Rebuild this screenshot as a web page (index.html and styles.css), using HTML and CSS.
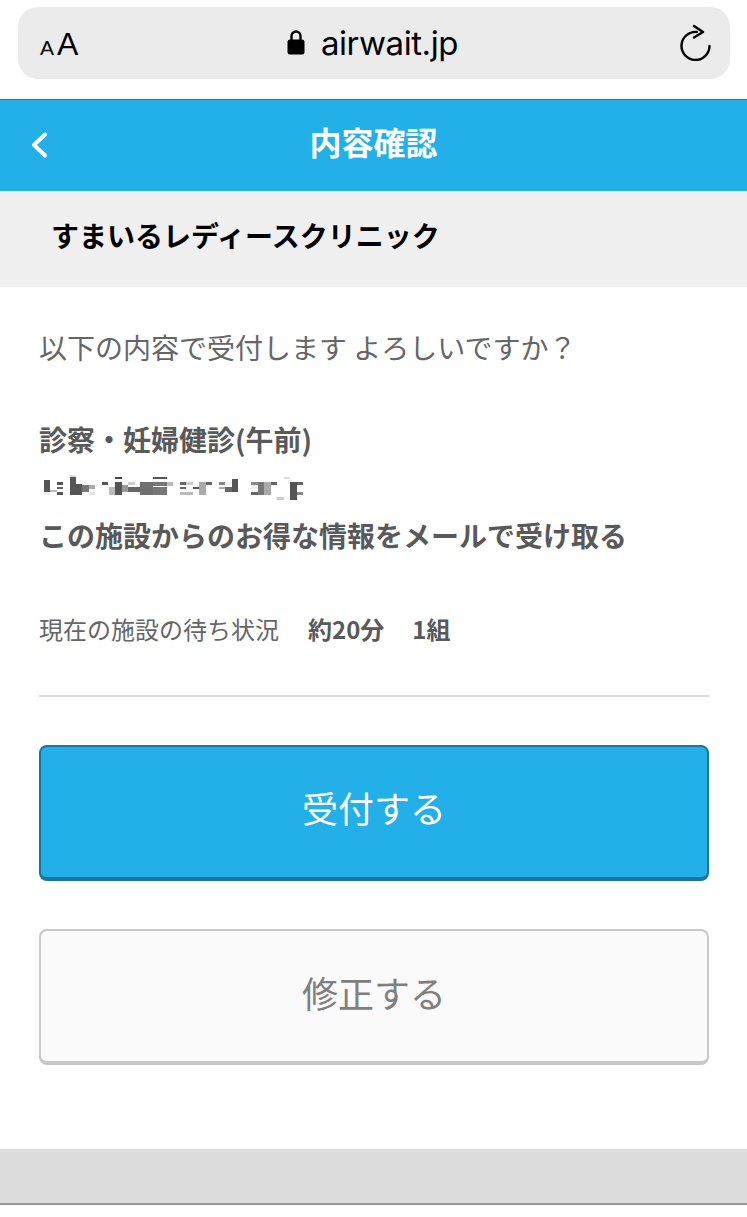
FILE: index.html
```html
<!DOCTYPE html>
<html lang="ja">
<head>
<meta charset="utf-8">
<title>内容確認</title>
<link rel="stylesheet" href="styles.css">
</head>
<body>
<div class="chrome">
  <div class="urlbar">
    <div class="aa"><span class="aa-small">A</span><span class="aa-big">A</span></div>
    <div class="address">
      <svg class="lock" width="18" height="26" viewBox="0 0 18 26"><path d="M4.500 11V7a4.500 4.500 0 0 1 9 0V11" fill="none" stroke="#000" stroke-width="2.400"/><rect x="0.500" y="10.500" width="17" height="15" rx="2.500" fill="#000"/></svg>
      <span class="host">airwait.jp</span>
    </div>
    <svg class="reload" width="32" height="38" viewBox="0 0 32 38"><path d="M17 8A14 14 0 1 0 29.500 22" fill="none" stroke="#000" stroke-width="2.400" stroke-linecap="round"/><path d="M14 2l9 6-9 5.500" fill="none" stroke="#000" stroke-width="2.400" stroke-linecap="round" stroke-linejoin="round"/></svg>
  </div>
</div>
<header class="nav">
  <svg class="back" width="16" height="26" viewBox="0 0 16 26"><path d="M14 2.500 3 13l11 10.500" fill="none" stroke="#fff" stroke-width="4" stroke-linecap="round" stroke-linejoin="round"/></svg>
  <h1 class="title">内容確認</h1>
</header>
<div class="clinic">すまいるレディースクリニック</div>
<main class="content">
  <p class="lead">以下の内容で受付します よろしいですか？</p>
  <p class="strong first">診察・妊婦健診(午前)</p>
  <svg class="mosaic" width="270" height="30" viewBox="0 0 270 30" aria-hidden="true">
    <rect x="4" y="8" width="6" height="12" fill="#555"/><rect x="4" y="20" width="6" height="3" fill="#eee"/><rect x="10" y="18" width="7" height="2" fill="#bbb"/><rect x="17" y="10" width="6" height="3" fill="#555"/><rect x="17" y="15" width="6" height="2" fill="#666"/><rect x="17" y="20" width="6" height="3" fill="#555"/>
    <rect x="30" y="3" width="6" height="2" fill="#ddd"/><rect x="30" y="5" width="6" height="18" fill="#555"/><rect x="36" y="12" width="6" height="11" fill="#555"/><rect x="42" y="13" width="7" height="7" fill="#777"/><rect x="49" y="13" width="6" height="4" fill="#aaa"/><rect x="49" y="20" width="6" height="3" fill="#e5e5e5"/>
    <rect x="62" y="10" width="6" height="3" fill="#555"/><rect x="69" y="15" width="6" height="8" fill="#bbb"/><rect x="75" y="5" width="7" height="2" fill="#444"/><rect x="75" y="10" width="7" height="13" fill="#555"/><rect x="82" y="13" width="6" height="7" fill="#999"/><rect x="88" y="10" width="7" height="3" fill="#ccc"/><rect x="88" y="15" width="12" height="5" fill="#666"/><rect x="100" y="10" width="13" height="13" fill="#707070"/><rect x="113" y="5" width="14" height="2" fill="#555"/><rect x="113" y="10" width="14" height="4" fill="#777"/><rect x="113" y="15" width="14" height="8" fill="#777"/><rect x="127" y="10" width="6" height="4" fill="#bbb"/>
    <rect x="140" y="10" width="6" height="3" fill="#666"/><rect x="140" y="15" width="6" height="2" fill="#666"/><rect x="140" y="20" width="13" height="3" fill="#bbb"/><rect x="146" y="10" width="7" height="3" fill="#ccc"/><rect x="153" y="15" width="6" height="2" fill="#555"/><rect x="159" y="10" width="7" height="13" fill="#aaa"/><rect x="166" y="10" width="6" height="3" fill="#666"/>
    <rect x="179" y="10" width="6" height="3" fill="#888"/><rect x="179" y="15" width="6" height="2" fill="#aaa"/><rect x="185" y="10" width="7" height="3" fill="#eee"/><rect x="185" y="15" width="7" height="5" fill="#666"/><rect x="192" y="7" width="6" height="13" fill="#555"/>
    <rect x="211" y="10" width="7" height="3" fill="#888"/><rect x="211" y="13" width="7" height="4" fill="#eee"/><rect x="211" y="20" width="7" height="3" fill="#666"/><rect x="218" y="10" width="6" height="13" fill="#777"/><rect x="224" y="10" width="7" height="13" fill="#aaa"/><rect x="231" y="10" width="6" height="3" fill="#666"/>
    <rect x="237" y="25" width="7" height="3" fill="#ccc"/><rect x="244" y="5" width="6" height="2" fill="#ddd"/><rect x="250" y="10" width="7" height="18" fill="#555"/><rect x="257" y="10" width="6" height="3" fill="#666"/><rect x="257" y="20" width="6" height="3" fill="#888"/>
  </svg>
  <p class="strong">この施設からのお得な情報をメールで受け取る</p>
  <div class="status">
    <span class="status-label">現在の施設の待ち状況</span>
    <b class="status-value">約20分</b>
    <b class="status-value">1組</b>
  </div>
  <hr class="rule">
  <button class="btn primary">受付する</button>
  <button class="btn secondary">修正する</button>
</main>
<footer class="foot"></footer>
</body>
</html>
```
FILE: styles.css
```css
* { box-sizing: border-box; }
html, body { margin: 0; padding: 0; background: #fff; }
body { width: 747px; height: 1217px; overflow: hidden; font-family: "Noto Sans CJK JP", "Noto Sans", sans-serif; color: #555; }
.chrome { height: 99px; padding: 7px 17px 20px 18px; }
.urlbar { height: 72px; background: #ebebeb; border-radius: 20px; display: flex; align-items: center; justify-content: space-between; padding: 0 18px 0 22px; }
.aa { width: 38px; display: flex; align-items: baseline; gap: 3px; margin-top: 2px; font-family: "Liberation Sans", sans-serif; color: #000; }
.aa-small { font-size: 21px; }
.aa-big { font-size: 32px; }
.address { display: flex; align-items: center; gap: 16px; margin-right: 13px; }
.lock { margin-top: -3px; }
.host { font-family: "Inter", "Liberation Sans", sans-serif; font-size: 33px; color: #000; letter-spacing: -0.4px; }
.nav { height: 92px; background: #23afe8; border-top: 1px solid #1b7fae; padding-bottom: 10px; display: flex; align-items: center; justify-content: center; position: relative; }
.back { position: absolute; left: 31px; top: 32px; }
.title { margin: 0; font-size: 32px; font-weight: 700; color: #fff; line-height: 1; }
.clinic { height: 96px; background: #f0f0f0; padding-left: 51px; font-size: 28px; font-weight: 700; color: #000; line-height: 88px; }
.content { padding: 0 38px 0 39px; height: 862px; display: flex; flex-direction: column; }
.lead { margin: 39px 0 0; font-size: 28px; line-height: 42px; color: #666; }
.strong { margin: 0; font-size: 28px; font-weight: 700; line-height: 48px; color: #595959; }
.first { margin-top: 47px; }
.mosaic { display: block; margin: 9px 0 9px 1px; flex: none; }
.status { margin-top: 52px; display: flex; align-items: center; font-size: 24px; line-height: 36px; }
.status-label { color: #666; margin-right: 29px; }
.status-value { font-weight: 700; color: #595959; margin-right: 28px; }
.rule { width: 100%; margin: 48px 0 0; border: 0; height: 2px; flex: none; background: #dcdcdc; }
.btn { display: block; width: 100%; height: 136px; flex: none; border-radius: 8px; font-family: inherit; font-size: 36px; }
.primary { margin-top: 48px; padding: 0 0 10px; background: #23afe8; color: #fff; border: 2px solid #1a76a0; border-bottom-width: 4px; }
.secondary { margin-top: 48px; padding: 0 0 8px; background: #fafafa; color: #7f7f7f; border: 2px solid #c8c8c8; border-bottom-width: 4px; }
.foot { height: 56px; background: #dcdcdc; border-bottom: 2px solid #999; }
```
